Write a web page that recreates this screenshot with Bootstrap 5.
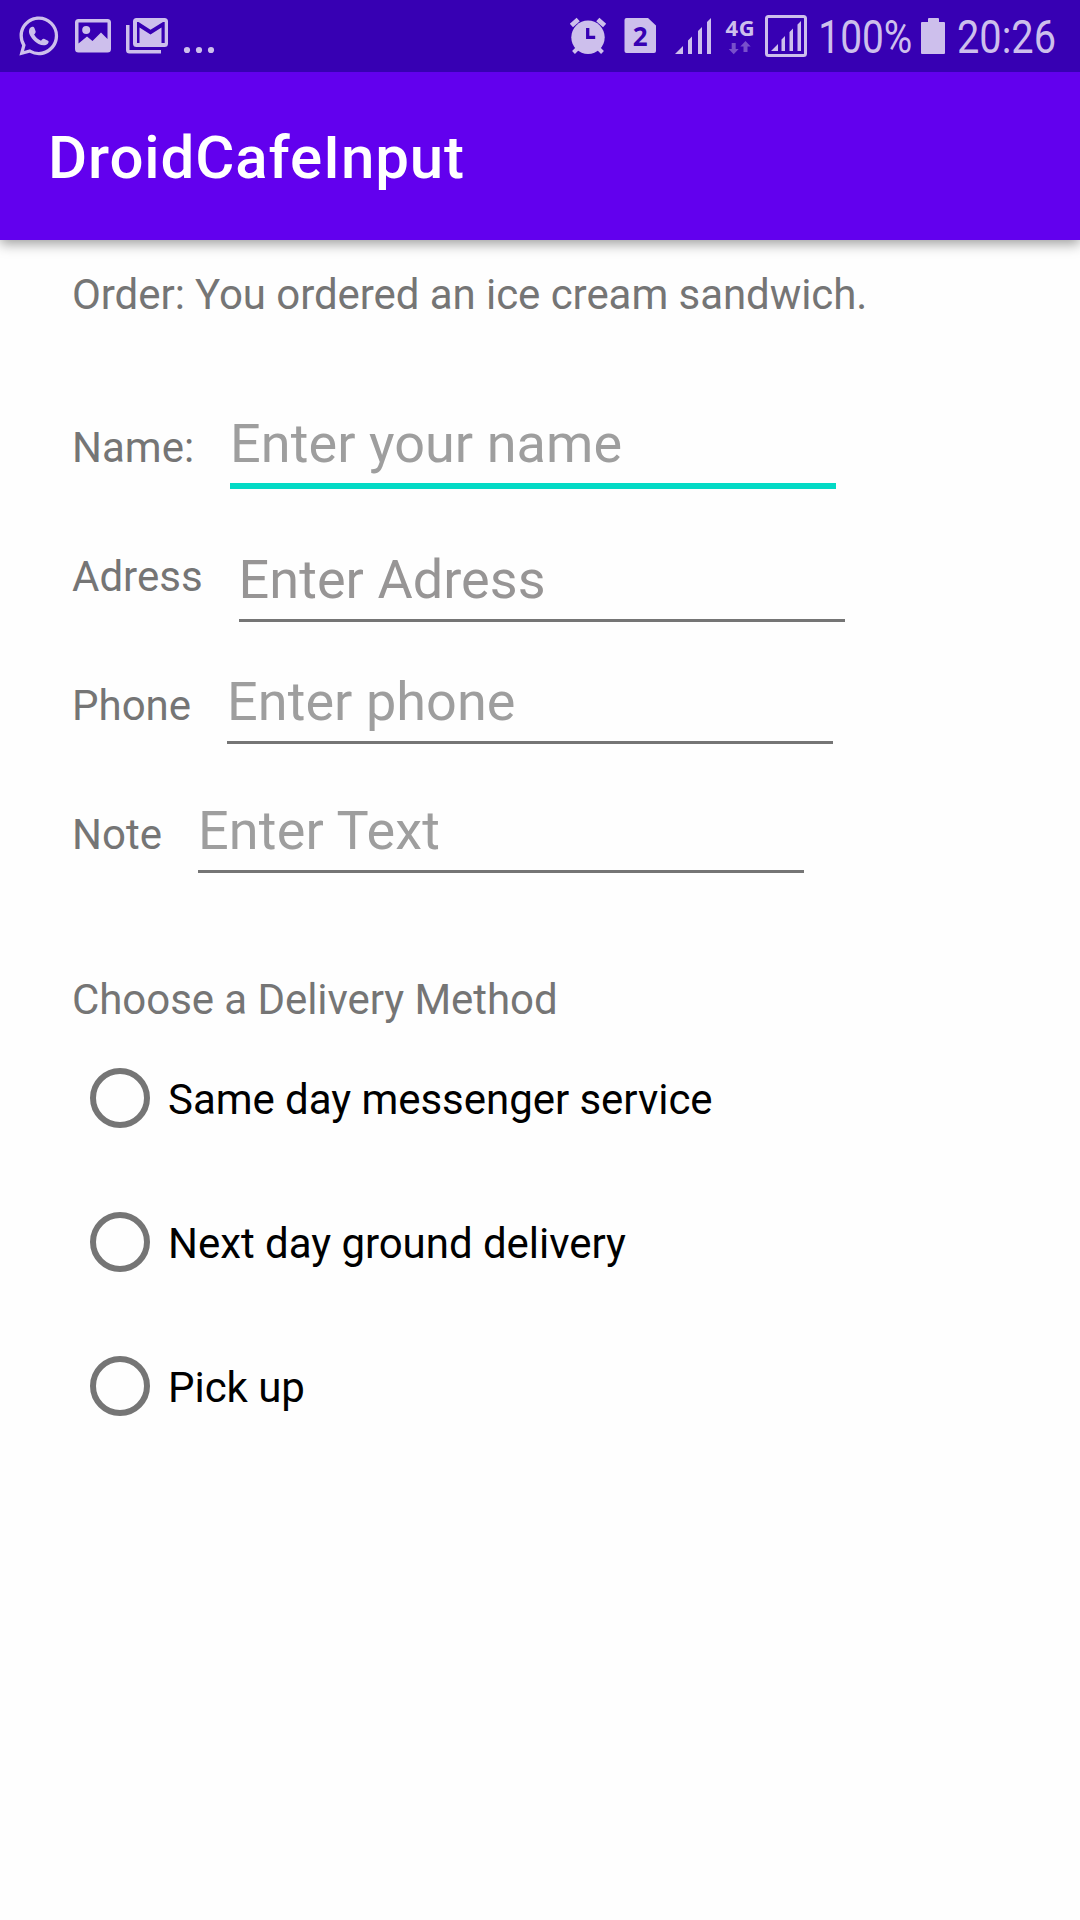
<!DOCTYPE html>
<html lang="en">
<head>
<meta charset="utf-8">
<meta name="viewport" content="width=device-width, initial-scale=1">
<title>DroidCafeInput</title>
<link href="https://cdn.jsdelivr.net/npm/bootstrap@5.3.0/dist/css/bootstrap.min.css" rel="stylesheet">
<style>
  body { font-family: Roboto, sans-serif; font-size: 42px; line-height: 50px; color: #757575; background: #fefefe; min-height: 1920px; overflow-x: hidden; }
  .status-bar { position: relative; height: 72px; background: #3700b3; }
  .status-bar svg { flex: none; display: block; height: 72px; overflow: visible; fill: #cdbfec; font-family: Roboto, sans-serif; }
  .app-bar { height: 168px; padding: 4px 48px 0; background: #6200ee; box-shadow: 0 4px 12px rgba(0,0,0,.38); }
  .app-title { font-size: 60px; line-height: 70px; font-weight: 500; letter-spacing: .9px; color: #fff; }
  .order-form { padding: 30px 72px 0; }
  .order-form p { letter-spacing: -.06px; }
  .field-row { gap: 36px; }
  .field-row label { padding-top: 11px; }
  .line-input { width: 606px; height: 74px; font-size: 54px; line-height: 64px; letter-spacing: .06px; padding: 0 0 9px; color: #212121; background: transparent; border: 0; border-bottom: 3px solid #757575; border-radius: 0; outline: 0; }
  .line-input::placeholder { color: #9e9e9e; opacity: 1; }
  .line-input.active-line { height: 77px; border-bottom: 6px solid #03dac5; }
  .name-row { margin-top: 92px; }
  .address-row { margin-top: 59px; }
  .address-row label { padding-top: 4px; }
  .address-row .line-input::placeholder { color: #979595; }
  .phone-row { margin-top: 48px; }
  .note-row { margin-top: 55px; }
  .note-row .line-input { letter-spacing: .2px; }
  .delivery { margin-top: 102px; }
  .delivery p { padding-bottom: 1px; }
  .delivery-option { height: 144px; gap: 18px; padding-left: 18px; }
  .delivery-option label { color: #000; padding-top: 4px; letter-spacing: -.04px; }
  .delivery-option .form-check-input { width: 60px; height: 60px; margin: 0; border: 6px solid #757575; background-color: transparent; }
</style>
<script src="https://cdn.jsdelivr.net/npm/bootstrap@5.3.0/dist/js/bootstrap.bundle.min.js"></script>
</head>
<body>
<header>
  <div class="status-bar d-flex justify-content-between">
    <div class="d-flex">
      <!-- messenger -->
      <svg width="67" viewBox="0 0 67 72"><path transform="translate(19.4 16.6) scale(2.43)" d="M13.601 2.326A7.85 7.85 0 0 0 7.994 0C3.627 0 .068 3.558.064 7.926c0 1.399.366 2.76 1.057 3.965L0 16l4.204-1.102a7.9 7.9 0 0 0 3.79.965h.004c4.368 0 7.926-3.558 7.93-7.93A7.9 7.9 0 0 0 13.6 2.326zM7.994 14.521a6.6 6.6 0 0 1-3.356-.92l-.24-.144-2.494.654.666-2.433-.156-.251a6.56 6.56 0 0 1-1.007-3.505c0-3.626 2.957-6.584 6.591-6.584a6.56 6.56 0 0 1 4.66 1.931 6.56 6.56 0 0 1 1.928 4.66c-.004 3.639-2.961 6.592-6.592 6.592"/><path d="M30.6 27.4c1.5-1 3.200-.7 3.800.6l1.200 3.200c.4 1.200-.3 2-1.500 3.400 1.700 3 3.900 4.800 6.900 6.100 1.200-1.400 1.900-2.300 3-1.900l4 2c1 .6.700 1.900-.2 2.900-2.500 2.200-5.800 1.800-9.300.2-5-2.400-9-8-9.500-11.600-.2-2 .4-4 1.600-4.900z"/></svg>
      <!-- gallery -->
      <svg width="52" viewBox="67 0 52 72"><path fill-rule="evenodd" d="M78.500 19h29a3.500 3.500 0 0 1 3.500 3.500v26.500a3.500 3.500 0 0 1-3.500 3.500h-29a3.500 3.500 0 0 1-3.500-3.500V22.500a3.500 3.500 0 0 1 3.500-3.500zM78.500 22.500V43.500L87 36.500l5.500 4.500 8.500-8.500 6.500 6.500V22.500z"/><circle cx="86.200" cy="30" r="4"/></svg>
      <!-- mail -->
      <svg width="58" viewBox="119 0 58 72"><path d="M126 25h3.500v25H161v3.500h-31.500a3.500 3.500 0 0 1-3.500-3.500z"/><path fill-rule="evenodd" d="M136.500 18h28a3.500 3.500 0 0 1 3.500 3.500v22a3.500 3.500 0 0 1-3.500 3.500h-28a3.500 3.500 0 0 1-3.500-3.500v-22a3.500 3.500 0 0 1 3.500-3.500zM137 22v21h2.500V27.500l11 7 11-7V43h3.200V22h-1.700l-12.500 7.800L138.500 22z"/></svg>
      <svg width="48" viewBox="177 0 48 72"><circle cx="187" cy="50" r="3.100"/><circle cx="199" cy="50" r="3.100"/><circle cx="211" cy="50" r="3.100"/></svg>
    </div>
    <div class="d-flex">
      <!-- alarm -->
      <svg width="50" viewBox="565 0 50 72"><circle cx="588" cy="37.300" r="16.700"/><path d="M571.400 25.500l6.800-6M597.800 19.500l6.800 6" stroke="#cdbfec" stroke-width="4.800"/><path d="M578 48l-4.500 4.500M598 48l4.500 4.500" stroke="#cdbfec" stroke-width="4"/><path d="M587.700 28v9.400h7.500" fill="none" stroke="#3700b3" stroke-width="3.300"/></svg>
      <!-- sim -->
      <svg width="55" viewBox="615 0 55 72"><path d="M626.500 18H648l8 7.500V51a2 2 0 0 1-2 2h-27.500a2 2 0 0 1-2-2V20a2 2 0 0 1 2-2z"/><text x="640.200" y="45.700" text-anchor="middle" font-family="Open Sans, sans-serif" font-weight="700" font-size="26" fill="#3700b3">2</text></svg>
      <!-- signal -->
      <svg width="50" viewBox="670 0 50 72"><path d="M675 54l8-8v8zM688 54V40.500l4-4V54zM698 54V31l4-4v27zM707 54V22l4-4v36z"/></svg>
      <!-- data -->
      <svg width="40" viewBox="720 0 40 72"><text x="725.600" y="36" font-family="Open Sans, sans-serif" font-weight="700" font-size="22" textLength="29" lengthAdjust="spacing">4G</text><path fill="#7850cb" d="M731.700 43h4v6h3l-5 5.300-5-5.300h3zM743.500 52v-5.500h-3.200l5.200-5.500 5.200 5.500h-3.200V52z"/></svg>
      <!-- second signal -->
      <svg width="52" viewBox="760 0 52 72"><rect x="766.500" y="16.500" width="39" height="39" rx="2" fill="none" stroke="#cdbfec" stroke-width="3"/><path d="M771 51l7-7v7zM781.500 51V39.500l3.500-3.500v15zM789.500 51V32l3.500-3.500V51zM797.500 51V24.500L801 21v30z"/></svg>
      <svg width="104" viewBox="812 0 104 72"><text x="818.300" y="53" font-size="46" textLength="94" lengthAdjust="spacingAndGlyphs">100%</text></svg>
      <!-- battery -->
      <svg width="36" viewBox="916 0 36 72"><path d="M922 22h6v-3a1 1 0 0 1 1-1h9a1 1 0 0 1 1 1v3h5a1 1 0 0 1 1 1v30a1 1 0 0 1-1 1h-22a1 1 0 0 1-1-1V23a1 1 0 0 1 1-1z"/></svg>
      <svg width="128" viewBox="952 0 128 72"><text x="957" y="53" font-size="46" textLength="99" lengthAdjust="spacingAndGlyphs">20:26</text></svg>
    </div>
  </div>
  <div class="app-bar d-flex align-items-center">
    <h1 class="app-title m-0">DroidCafeInput</h1>
  </div>
</header>
<main>
  <form class="order-form">
    <p class="m-0">Order: You ordered an ice cream sandwich.</p>
    <div class="field-row name-row d-flex align-items-start">
      <label for="name">Name:</label>
      <input id="name" type="text" class="line-input active-line" placeholder="Enter your name">
    </div>
    <div class="field-row address-row d-flex align-items-start">
      <label for="address">Adress</label>
      <input id="address" type="text" class="line-input" placeholder="Enter Adress">
    </div>
    <div class="field-row phone-row d-flex align-items-start">
      <label for="phone">Phone</label>
      <input id="phone" type="tel" class="line-input" placeholder="Enter phone">
    </div>
    <div class="field-row note-row d-flex align-items-start">
      <label for="note">Note</label>
      <input id="note" type="text" class="line-input" placeholder="Enter Text">
    </div>
    <div class="delivery">
      <p class="m-0">Choose a Delivery Method</p>
      <div class="delivery-option d-flex align-items-center">
        <input class="form-check-input" type="radio" name="delivery" id="sameday">
        <label for="sameday">Same day messenger service</label>
      </div>
      <div class="delivery-option d-flex align-items-center">
        <input class="form-check-input" type="radio" name="delivery" id="nextday">
        <label for="nextday">Next day ground delivery</label>
      </div>
      <div class="delivery-option d-flex align-items-center">
        <input class="form-check-input" type="radio" name="delivery" id="pickup">
        <label for="pickup">Pick up</label>
      </div>
    </div>
  </form>
</main>
</body>
</html>
